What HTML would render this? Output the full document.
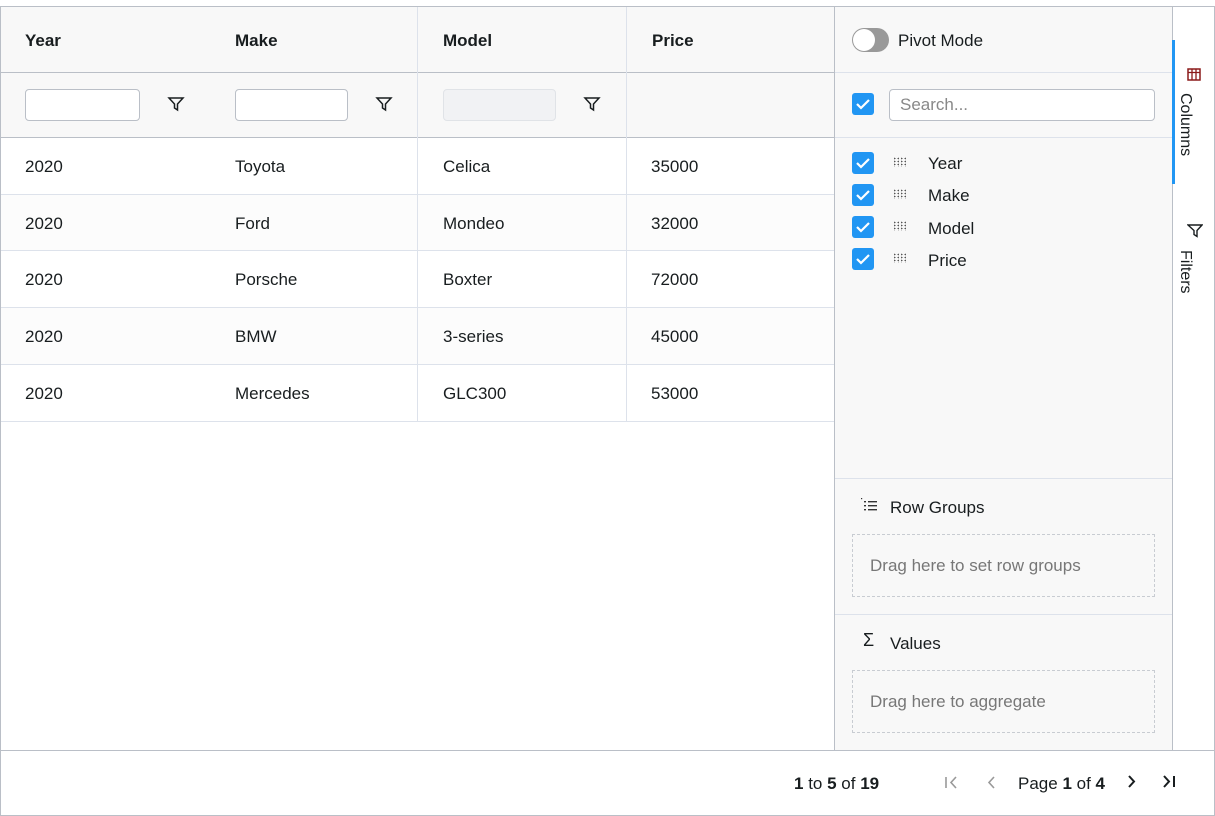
<!DOCTYPE html><html><head><style>
*{box-sizing:border-box;margin:0;padding:0}
body{width:1215px;height:816px;background:#fff;font-family:"Liberation Sans",sans-serif;color:#181d1f;font-size:17px;position:relative;overflow:hidden}
.a{position:absolute}
.b{border:1px solid #babfc7}
.hdr{background:#f8f8f8}
.cell{position:absolute;line-height:56px;font-size:17px}
.hb{font-weight:bold}
.inp{position:absolute;height:32px;border:1px solid #babfc7;border-radius:4px;background:#fff}
.cb{position:absolute;width:22px;height:22px;background:#2196f3;border-radius:3px}
.cb svg{position:absolute;left:3px;top:4px}
.grip{position:absolute;width:14px;height:10px;background-image:radial-gradient(#555 0.9px,transparent 1px);background-size:3.5px 3px}
.drop{position:absolute;border:1px dashed #c8ccd2;color:#777;font-size:17px;padding-left:17px;line-height:62px}
.fil{position:absolute}
</style></head><body>
<div class="a b" style="left:0;top:6px;width:1215px;height:810px"></div>
<div class="a hdr" style="left:1px;top:7px;width:833px;height:130px"></div>
<div class="a" style="left:1px;top:72px;width:833px;height:1px;background:#babfc7"></div>
<div class="a" style="left:1px;top:137px;width:833px;height:1px;background:#babfc7"></div>
<div class="a" style="left:417px;top:7px;width:1px;height:414px;background:#dde2eb"></div>
<div class="a" style="left:626px;top:7px;width:1px;height:414px;background:#dde2eb"></div>
<div class="cell hb" style="left:25px;top:13px">Year</div>
<div class="cell hb" style="left:235px;top:13px">Make</div>
<div class="cell hb" style="left:443px;top:13px">Model</div>
<div class="cell hb" style="left:652px;top:13px">Price</div>
<div class="inp" style="left:25px;top:89px;width:115px"></div>
<div class="inp" style="left:235px;top:89px;width:113px"></div>
<div class="inp" style="left:443px;top:89px;width:113px;background:#f1f2f4;border-color:#e0e3e7"></div>
<svg class="fil" style="left:167px;top:96px" width="18" height="16" viewBox="0 0 18 16"><path d="M2 2h14l-5.5 6v6l-3-2V8z" fill="none" stroke="#181d1f" stroke-width="1.5"/></svg>
<svg class="fil" style="left:375px;top:96px" width="18" height="16" viewBox="0 0 18 16"><path d="M2 2h14l-5.5 6v6l-3-2V8z" fill="none" stroke="#181d1f" stroke-width="1.5"/></svg>
<svg class="fil" style="left:583px;top:96px" width="18" height="16" viewBox="0 0 18 16"><path d="M2 2h14l-5.5 6v6l-3-2V8z" fill="none" stroke="#181d1f" stroke-width="1.5"/></svg>
<div class="a" style="left:1px;top:138px;width:833px;height:283px">
<div class="a" style="left:0;top:0;width:833px;height:57px;border-bottom:1px solid #dde2eb;background:#fff"></div>
<div class="a" style="left:0;top:57px;width:833px;height:56px;border-bottom:1px solid #dde2eb;background:#fcfcfc"></div>
<div class="a" style="left:0;top:113px;width:833px;height:57px;border-bottom:1px solid #dde2eb;background:#fff"></div>
<div class="a" style="left:0;top:170px;width:833px;height:57px;border-bottom:1px solid #dde2eb;background:#fcfcfc"></div>
<div class="a" style="left:0;top:227px;width:833px;height:57px;border-bottom:1px solid #dde2eb;background:#fff"></div>
</div>
<div class="a" style="left:417px;top:138px;width:1px;height:283px;background:#dde2eb"></div>
<div class="a" style="left:626px;top:138px;width:1px;height:283px;background:#dde2eb"></div>
<div class="cell" style="left:25px;top:139px">2020</div><div class="cell" style="left:235px;top:139px">Toyota</div><div class="cell" style="left:443px;top:139px">Celica</div><div class="cell" style="left:651px;top:139px">35000</div>
<div class="cell" style="left:25px;top:196px">2020</div><div class="cell" style="left:235px;top:196px">Ford</div><div class="cell" style="left:443px;top:196px">Mondeo</div><div class="cell" style="left:651px;top:196px">32000</div>
<div class="cell" style="left:25px;top:252px">2020</div><div class="cell" style="left:235px;top:252px">Porsche</div><div class="cell" style="left:443px;top:252px">Boxter</div><div class="cell" style="left:651px;top:252px">72000</div>
<div class="cell" style="left:25px;top:309px">2020</div><div class="cell" style="left:235px;top:309px">BMW</div><div class="cell" style="left:443px;top:309px">3-series</div><div class="cell" style="left:651px;top:309px">45000</div>
<div class="cell" style="left:25px;top:366px">2020</div><div class="cell" style="left:235px;top:366px">Mercedes</div><div class="cell" style="left:443px;top:366px">GLC300</div><div class="cell" style="left:651px;top:366px">53000</div>
<!-- side panel -->
<div class="a" style="left:834px;top:7px;width:339px;height:743px;background:#f8f8f8;border-left:1px solid #babfc7;border-right:1px solid #babfc7"></div>
<div class="a" style="left:852px;top:28px;width:37px;height:24px;border-radius:12px;background:#999"></div>
<div class="a" style="left:853px;top:29px;width:22px;height:22px;border-radius:11px;background:#fff"></div>
<div class="a" style="left:898px;top:30px;line-height:22px">Pivot Mode</div>
<div class="a" style="left:835px;top:72px;width:337px;height:1px;background:#dde2eb"></div>
<div class="cb" style="left:852px;top:93px"><svg width="16" height="14"><path d="M2 7l4 4 8-8" fill="none" stroke="#fff" stroke-width="2.2"/></svg></div>
<div class="inp" style="left:889px;top:89px;width:266px;color:#888;padding-left:10px;line-height:30px">Search...</div>
<div class="a" style="left:835px;top:137px;width:337px;height:1px;background:#dde2eb"></div>
<div class="cb" style="left:852px;top:152px"><svg width="16" height="14"><path d="M2 7l4 4 8-8" fill="none" stroke="#fff" stroke-width="2.2"/></svg></div>
<div class="grip" style="left:893px;top:157px"></div><div class="a" style="left:928px;top:154px">Year</div>
<div class="cb" style="left:852px;top:184px"><svg width="16" height="14"><path d="M2 7l4 4 8-8" fill="none" stroke="#fff" stroke-width="2.2"/></svg></div>
<div class="grip" style="left:893px;top:189px"></div><div class="a" style="left:928px;top:186px">Make</div>
<div class="cb" style="left:852px;top:216px"><svg width="16" height="14"><path d="M2 7l4 4 8-8" fill="none" stroke="#fff" stroke-width="2.2"/></svg></div>
<div class="grip" style="left:893px;top:221px"></div><div class="a" style="left:928px;top:219px">Model</div>
<div class="cb" style="left:852px;top:248px"><svg width="16" height="14"><path d="M2 7l4 4 8-8" fill="none" stroke="#fff" stroke-width="2.2"/></svg></div>
<div class="grip" style="left:893px;top:253px"></div><div class="a" style="left:928px;top:251px">Price</div>
<div class="a" style="left:835px;top:478px;width:337px;height:1px;background:#dde2eb"></div>
<svg class="a" style="left:860px;top:498px" width="20" height="16"><rect x="1" y="0" width="1.2" height="1.2" fill="#333"/><rect x="4" y="3" width="2" height="1.4" fill="#333"/><rect x="4" y="7" width="2" height="1.4" fill="#333"/><rect x="4" y="11" width="2" height="1.4" fill="#333"/><rect x="8" y="3" width="9" height="1.4" fill="#333"/><rect x="8" y="7" width="9" height="1.4" fill="#333"/><rect x="8" y="11" width="9" height="1.4" fill="#333"/></svg>
<div class="a" style="left:890px;top:498px">Row Groups</div>
<div class="drop" style="left:852px;top:534px;width:303px;height:63px">Drag here to set row groups</div>
<div class="a" style="left:835px;top:614px;width:337px;height:1px;background:#dde2eb"></div>
<div class="a" style="left:863px;top:630px;font-size:18px">Σ</div>
<div class="a" style="left:890px;top:634px">Values</div>
<div class="drop" style="left:852px;top:670px;width:303px;height:63px">Drag here to aggregate</div>
<!-- side bar -->
<div class="a" style="left:1172px;top:40px;width:3px;height:144px;background:#2196f3"></div>
<svg class="a" style="left:1187px;top:68px" width="14" height="13"><rect x="1" y="1" width="12" height="11" fill="none" stroke="#8b1a1a" stroke-width="1.5"/><path d="M1 4.5h12M5 1v11M9 1v11" stroke="#8b1a1a" stroke-width="1.3"/></svg>
<div class="a" style="left:1176px;top:93px;writing-mode:vertical-rl;font-size:16px">Columns</div>
<svg class="a" style="left:1187px;top:224px" width="16" height="14"><path d="M1 1h14l-5 5.5v6l-3-2V6.5z" fill="none" stroke="#181d1f" stroke-width="1.4"/></svg>
<div class="a" style="left:1176px;top:250px;writing-mode:vertical-rl;font-size:16px">Filters</div>
<!-- footer -->
<div class="a" style="left:1px;top:750px;width:1213px;height:1px;background:#babfc7"></div>
<div class="a" style="left:794px;top:774px"><b>1</b> to <b>5</b> of <b>19</b></div>
<svg class="a" style="left:944px;top:775px" width="16" height="16"><path d="M2 2v11M12 2L7 7.5l5 5.5" fill="none" stroke="#999" stroke-width="1.6"/></svg>
<svg class="a" style="left:985px;top:775px" width="12" height="16"><path d="M9 2L4 7.5l5 5.5" fill="none" stroke="#999" stroke-width="1.6"/></svg>
<div class="a" style="left:1018px;top:774px">Page <b>1</b> of <b>4</b></div>
<svg class="a" style="left:1126px;top:774px" width="12" height="16"><path d="M3 2l5 5.5-5 5.5" fill="none" stroke="#181d1f" stroke-width="2"/></svg>
<svg class="a" style="left:1162px;top:774px" width="16" height="16"><path d="M2 2l5 5.5-5 5.5M12 2v11" fill="none" stroke="#181d1f" stroke-width="2"/></svg>
</body></html>
